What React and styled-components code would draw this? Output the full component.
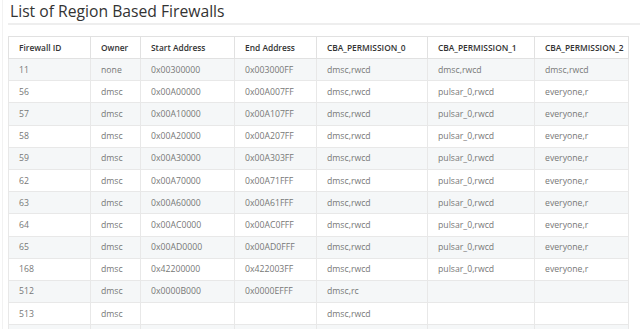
import React from 'react';
import styled, { createGlobalStyle } from 'styled-components';

const GlobalStyle = createGlobalStyle`
  body {
    margin: 0;
    background: #fff;
    font-family: "Open Sans", "Noto Sans", sans-serif;
  }
`;

const Page = styled.div`
  margin-left: 2px;
  padding-left: 5px;
  border-left: 1px solid #f2f2f2;
`;

const Title = styled.h2`
  margin: 0;
  padding: 3px 0 3px 2px;
  font-size: 15.7px;
  font-weight: 400;
  line-height: 17px;
  color: #333;
  border-bottom: 2px solid #eee;
`;

const Table = styled.table`
  margin-top: 11px;
  width: 620px;
  table-layout: fixed;
  border-collapse: collapse;
  border: 1px solid #e1e1e1;
  font-size: 8.7px;
`;

const HeadRow = styled.tr`
  height: 22px;
`;

const Th = styled.th`
  padding: 0 10px;
  text-align: left;
  font-size: 8.4px;
  font-weight: 600;
  color: #333;
  border: 1px solid #e1e1e1;
  white-space: nowrap;
`;

const Row = styled.tr`
  height: 22.2px;
  background: ${(p) => (p.$odd ? '#f5f7f8' : '#fff')};
`;

const Td = styled.td`
  padding: 0 10px;
  color: #777;
  border: 1px solid #e8e8e8;
  white-space: nowrap;
`;

const columns = [
  ['Firewall ID', 82],
  ['Owner', 50],
  ['Start Address', 94],
  ['End Address', 82],
  ['CBA_PERMISSION_0', 111],
  ['CBA_PERMISSION_1', 107],
  ['CBA_PERMISSION_2', 94],
];

const rows = [
  ['11', 'none', '0x00300000', '0x003000FF', 'dmsc,rwcd', 'dmsc,rwcd', 'dmsc,rwcd'],
  ['56', 'dmsc', '0x00A00000', '0x00A007FF', 'dmsc,rwcd', 'pulsar_0,rwcd', 'everyone,r'],
  ['57', 'dmsc', '0x00A10000', '0x00A107FF', 'dmsc,rwcd', 'pulsar_0,rwcd', 'everyone,r'],
  ['58', 'dmsc', '0x00A20000', '0x00A207FF', 'dmsc,rwcd', 'pulsar_0,rwcd', 'everyone,r'],
  ['59', 'dmsc', '0x00A30000', '0x00A303FF', 'dmsc,rwcd', 'pulsar_0,rwcd', 'everyone,r'],
  ['62', 'dmsc', '0x00A70000', '0x00A71FFF', 'dmsc,rwcd', 'pulsar_0,rwcd', 'everyone,r'],
  ['63', 'dmsc', '0x00A60000', '0x00A61FFF', 'dmsc,rwcd', 'pulsar_0,rwcd', 'everyone,r'],
  ['64', 'dmsc', '0x00AC0000', '0x00AC0FFF', 'dmsc,rwcd', 'pulsar_0,rwcd', 'everyone,r'],
  ['65', 'dmsc', '0x00AD0000', '0x00AD0FFF', 'dmsc,rwcd', 'pulsar_0,rwcd', 'everyone,r'],
  ['168', 'dmsc', '0x42200000', '0x422003FF', 'dmsc,rwcd', 'pulsar_0,rwcd', 'everyone,r'],
  ['512', 'dmsc', '0x0000B000', '0x0000EFFF', 'dmsc,rc', '', ''],
  ['513', 'dmsc', '', '', 'dmsc,rwcd', '', ''],
  ['', '', '', '', '', '', ''],
];

export default function App() {
  return (
    <>
      <GlobalStyle />
      <Page>
        <Title>List of Region Based Firewalls</Title>
        <Table>
          <colgroup>
            {columns.map(([name, w]) => (
              <col key={name} style={{ width: w }} />
            ))}
          </colgroup>
          <thead>
            <HeadRow>
              {columns.map(([name]) => (
                <Th key={name}>{name}</Th>
              ))}
            </HeadRow>
          </thead>
          <tbody>
            {rows.map((r, i) => (
              <Row key={i} $odd={i % 2 === 0}>
                {r.map((c, j) => (
                  <Td key={j}>{c}</Td>
                ))}
              </Row>
            ))}
          </tbody>
        </Table>
      </Page>
    </>
  );
}
